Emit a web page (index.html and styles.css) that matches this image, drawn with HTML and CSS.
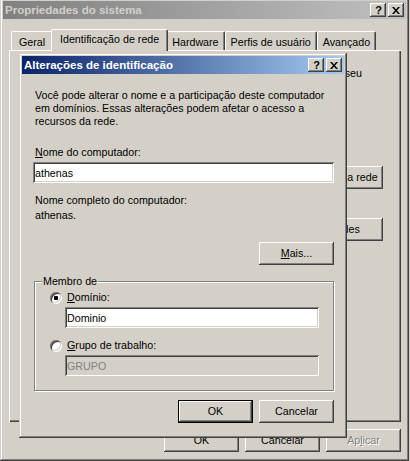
FILE: index.html
```html
<!DOCTYPE html>
<html lang="pt-BR">
<head>
    <meta charset="UTF-8">
    <meta name="viewport" content="width=device-width, initial-scale=1.0">
    <title>Propriedades do sistema</title>
    <link rel="stylesheet" href="styles.css">
</head>
<body>
    <div class="window outer">
        <div class="caption inactive">
            <span class="caption-title">Propriedades do sistema</span>
            <div class="caption-buttons">
                <span class="cap-btn help">?</span>
                <span class="cap-btn close">
                    <svg width="8" height="7" viewBox="0 0 8 7"><path d="M0 0h2l2 2.4 2-2.4h2L5 3.5 8 7H6L4 4.6 2 7H0l3-3.5z"/></svg>
                </span>
            </div>
        </div>
        <div class="outer-body">
            <div class="tabs">
                <div class="tab">Geral</div>
                <div class="tab selected">Identificação de rede</div>
                <div class="tab">Hardware</div>
                <div class="tab">Perfis de usuário</div>
                <div class="tab">Avançado</div>
            </div>
            <div class="panel">
                <div class="note">seu</div>
                <div class="panel-row first"><button class="btn wide">Identificação da rede</button></div>
                <div class="panel-row"><button class="btn wide">Propriedades</button></div>
            </div>
            <div class="button-row">
                <button class="btn">OK</button>
                <button class="btn">Cancelar</button>
                <button class="btn" disabled>Ap<u>l</u>icar</button>
            </div>
        </div>
    </div>

    <div class="window dialog">
        <div class="caption">
            <span class="caption-title">Alterações de identificação</span>
            <div class="caption-buttons">
                <span class="cap-btn help">?</span>
                <span class="cap-btn close">
                    <svg width="8" height="7" viewBox="0 0 8 7"><path d="M0 0h2l2 2.4 2-2.4h2L5 3.5 8 7H6L4 4.6 2 7H0l3-3.5z"/></svg>
                </span>
            </div>
        </div>
        <div class="dialog-body">
            <p class="intro">Você pode alterar o nome e a participação deste computador em domínios. Essas alterações podem afetar o acesso a recursos da rede.</p>

            <label class="label name-label" for="computerName"><u>N</u>ome do computador:</label>
            <input class="field" type="text" id="computerName" value="athenas">

            <div class="label full-label">Nome completo do computador:</div>
            <div class="label full-name">athenas.</div>

            <div class="more-row"><button class="btn"><u>M</u>ais...</button></div>

            <fieldset class="group">
                <legend>Membro de</legend>
                <label class="radio-row">
                    <input class="radio" type="radio" name="member" checked>
                    <span><u>D</u>omínio:</span>
                </label>
                <input class="field member-field" type="text" value="Dominio">
                <label class="radio-row second">
                    <input class="radio" type="radio" name="member">
                    <span><u>G</u>rupo de trabalho:</span>
                </label>
                <input class="field member-field" type="text" value="GRUPO" disabled>
            </fieldset>

            <div class="button-row dialog-buttons">
                <button class="btn default">OK</button>
                <button class="btn">Cancelar</button>
            </div>
        </div>
    </div>
</body>
</html>
```

FILE: styles.css
```css
* {
    box-sizing: border-box;
}

body {
    margin: 0;
    width: 410px;
    height: 461px;
    position: relative;
    overflow: hidden;
    background-color: #d4d0c8;
    font-family: "Liberation Sans", Arial, sans-serif;
    font-size: 10.7px;
    line-height: 13px;
    color: #000;
}

u {
    text-decoration-thickness: 1px;
    text-underline-offset: 1px;
}

/* windows */

.window {
    position: absolute;
    display: flex;
    flex-direction: column;
    padding: 3px;
    background-color: #d4d0c8;
    box-shadow: inset -1px -1px #404040, inset 1px 1px #d4d0c8,
                inset -2px -2px #808080, inset 2px 2px #fff;
}

.outer {
    left: 0;
    top: -2px;
    width: 409px;
    height: 463px;
}

.dialog {
    left: 19px;
    top: 53px;
    width: 328px;
    height: 385px;
    z-index: 5;
}

.caption {
    height: 18px;
    display: flex;
    align-items: center;
    padding: 0 2px;
    font-size: 11.5px;
    font-weight: bold;
    color: #fff;
    background: linear-gradient(to right, #0a246a, #a6caf0);
}

.caption.inactive {
    color: #d4d0c8;
    background: linear-gradient(to right, #808080, #c0c0c0);
}

.caption-title {
    flex: 1;
    white-space: nowrap;
}

.caption-buttons {
    display: flex;
    gap: 2px;
}

.cap-btn {
    width: 16px;
    height: 14px;
    display: flex;
    align-items: center;
    justify-content: center;
    background-color: #d4d0c8;
    color: #000;
    font-size: 11px;
    font-weight: bold;
    line-height: 14px;
    box-shadow: inset -1px -1px #404040, inset 1px 1px #fff,
                inset -2px -2px #808080, inset 2px 2px #d4d0c8;
}

.cap-btn.help {
    padding-left: 1px;
}

.cap-btn svg {
    display: block;
    fill: #000;
}

/* buttons and fields */

.btn {
    width: 75px;
    height: 23px;
    padding: 0;
    border: 0;
    font: inherit;
    color: #000;
    background-color: #d4d0c8;
    box-shadow: inset -1px -1px #404040, inset 1px 1px #fff,
                inset -2px -2px #808080, inset 2px 2px #d4d0c8;
}

.btn.default {
    border: 1px solid #000;
}

.btn:disabled {
    color: #808080;
    text-shadow: 1px 1px #fff;
}

.btn.wide {
    width: 110px;
}

.field {
    display: block;
    height: 21px;
    width: 100%;
    margin: 3px 0 0;
    padding: 0 2px;
    border: 0;
    outline: none;
    font: inherit;
    color: #000;
    background-color: #fff;
    box-shadow: inset 1px 1px #808080, inset -1px -1px #fff,
                inset 2px 2px #404040, inset -2px -2px #d4d0c8;
}

.field:disabled {
    color: #808080;
    background-color: #d4d0c8;
}

.button-row {
    display: flex;
    justify-content: flex-end;
    gap: 6px;
}

/* property sheet */

.outer-body {
    padding: 10px 5px 0 6px;
}

.tabs {
    display: flex;
    align-items: flex-end;
    height: 21px;
    padding-left: 2px;
    position: relative;
    z-index: 1;
}

.tab {
    min-width: 42px;
    height: 19px;
    padding: 2px 5px 0;
    line-height: 17px;
    text-align: center;
    white-space: nowrap;
    background-color: #d4d0c8;
    border-top: 1px solid #fff;
    border-left: 1px solid #fff;
    border-right: 1px solid #404040;
    border-radius: 2px 2px 0 0;
    box-shadow: inset -1px 0 #808080;
}

.tab.selected {
    height: 22px;
    margin: 0 -2px -1px;
    padding: 1px 8px 0;
    position: relative;
    z-index: 2;
}

.panel {
    height: 372px;
    padding: 17px 18px 0 0;
    box-shadow: inset 1px 1px #fff, inset -1px -1px #404040, inset -2px -2px #808080;
}

.note {
    text-align: right;
    margin-right: 21px;
}

.panel-row {
    display: flex;
    justify-content: flex-end;
    margin-top: 29px;
}

.panel-row.first {
    margin-top: 86px;
}

.outer-body > .button-row {
    margin-top: 7px;
}

/* identification dialog */

.dialog-body {
    padding: 15px 10px 0 11px;
}

.intro {
    margin: 0;
    padding-left: 2px;
}

.label {
    display: block;
    padding-left: 2px;
}

.name-label {
    margin-top: 18px;
}

.full-label {
    margin-top: 11px;
}

.full-name {
    margin-top: 2px;
}

.more-row {
    display: flex;
    justify-content: flex-end;
    margin-top: 20px;
}

.group {
    margin: 10px 0 0 1px;
    padding: 3px 14px 14px 7px;
    border: 1px solid #808080;
    box-shadow: inset 1px 1px #fff, 1px 1px #fff;
}

.group legend {
    padding: 0 1px;
    line-height: 13px;
    background-color: #d4d0c8;
}

.radio-row {
    display: flex;
    align-items: center;
    gap: 5px;
    margin-left: 8px;
}

.radio-row.second {
    margin-top: 11px;
}

.radio {
    appearance: none;
    margin: 0;
    width: 12px;
    height: 12px;
    border-radius: 50%;
    background-color: #fff;
    box-shadow: inset 1px 1px #808080, inset -1px -1px #fff,
                inset 2px 2px #404040, inset -2px -2px #d4d0c8;
}

.radio:checked {
    background: radial-gradient(circle, #000 0 2px, #fff 2.5px);
}

.member-field {
    width: 254px;
    margin-left: 23px;
}

.dialog-buttons {
    margin-top: 9px;
}
```
